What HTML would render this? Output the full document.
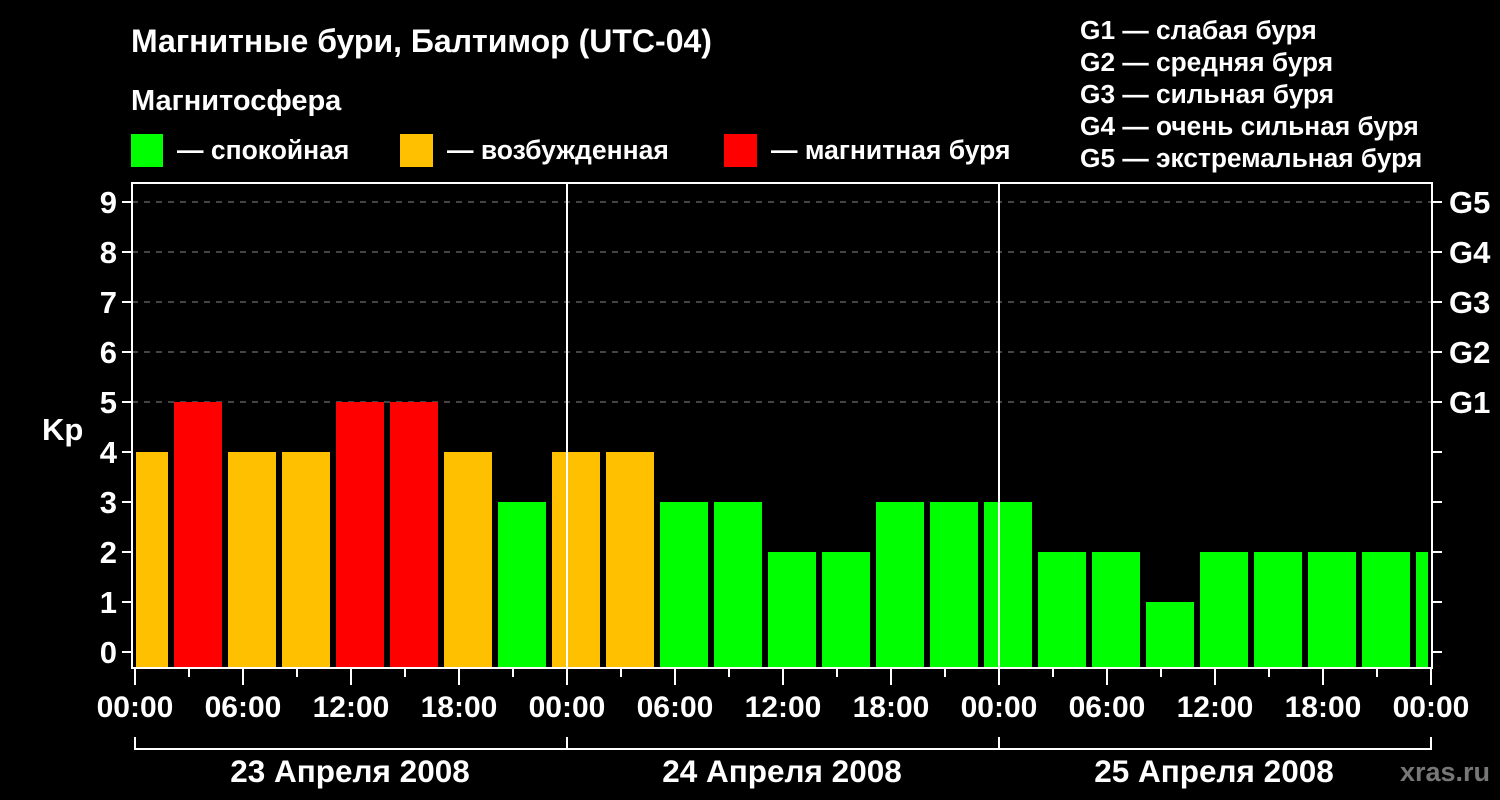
<!DOCTYPE html>
<html><head><meta charset="utf-8"><style>
html,body{margin:0;padding:0;background:#000;width:1500px;height:800px;overflow:hidden}
svg text{font-family:"Liberation Sans",sans-serif;font-weight:bold;fill:#fff}
</style></head><body>
<svg width="1500" height="800" xmlns="http://www.w3.org/2000/svg">
<text x="131" y="52" font-size="32">Магнитные бури, Балтимор (UTC-04)</text>
<text x="131" y="110" font-size="29">Магнитосфера</text>
<rect x="131" y="134" width="32" height="33" fill="#00ff00"/>
<text x="177" y="159" font-size="26.5">— спокойная</text>
<rect x="400" y="134" width="33" height="33" fill="#ffc000"/>
<text x="447" y="159" font-size="26.5">— возбужденная</text>
<rect x="724" y="134" width="33" height="33" fill="#ff0000"/>
<text x="771" y="159" font-size="26.5">— магнитная буря</text>
<g font-size="26.3">
<text x="1080" y="39">G1 — слабая буря</text>
<text x="1080" y="71">G2 — средняя буря</text>
<text x="1080" y="103">G3 — сильная буря</text>
<text x="1080" y="135">G4 — очень сильная буря</text>
<text x="1080" y="167">G5 — экстремальная буря</text>
</g>
<g id="grid" stroke="#888" stroke-dasharray="6,6" stroke-width="1">
<line x1="132" y1="202" x2="1432" y2="202"/>
<line x1="132" y1="252" x2="1432" y2="252"/>
<line x1="132" y1="302" x2="1432" y2="302"/>
<line x1="132" y1="352" x2="1432" y2="352"/>
<line x1="132" y1="402" x2="1432" y2="402"/>
</g>
<g id="bars"></g>
<g stroke="#fff" stroke-width="2" fill="none">
<rect x="132" y="183" width="1300" height="485"/>
<line x1="567" y1="183" x2="567" y2="668"/>
<line x1="999" y1="183" x2="999" y2="668"/>
<polyline points="135,737 135,749 1431,749 1431,737"/>
<line x1="567" y1="737" x2="567" y2="749"/>
<line x1="999" y1="737" x2="999" y2="749"/>
</g>
<g id="ticks" stroke="#fff" stroke-width="2"></g>
<g font-size="31" text-anchor="end" id="ylab"></g>
<text x="42" y="440" font-size="31">Kp</text>
<g font-size="31" id="glab">
<text x="1449" y="213">G5</text><text x="1449" y="263">G4</text><text x="1449" y="313">G3</text><text x="1449" y="363">G2</text><text x="1449" y="413">G1</text>
</g>
<g font-size="30" text-anchor="middle" id="xlab"></g>
<g font-size="31.5" text-anchor="middle">
<text x="350" y="782">23 Апреля 2008</text>
<text x="782" y="782">24 Апреля 2008</text>
<text x="1214" y="782">25 Апреля 2008</text>
</g>
<text x="1490" y="781" font-size="27" text-anchor="end" style="fill:#777">xras.ru</text>
</svg>
<script>
var ns="http://www.w3.org/2000/svg";
function el(p,t,a,txt){var e=document.createElementNS(ns,t);for(var k in a)e.setAttribute(k,a[k]);if(txt!=null)e.textContent=txt;document.getElementById(p).appendChild(e);}
var v=[4,5,4,4,5,5,4,3,4,4,3,3,2,2,3,3,3,2,2,1,2,2,2,2,2];
v.forEach(function(k,i){var x=120+54*i,w=48;if(x<136){w-=136-x;x=136;}if(x+w>1428)w=1428-x;
var c=k>=5?"#ff0000":(k==4?"#ffc000":"#00ff00");var y=652-50*k;
el("bars","rect",{x:x,y:y,width:w,height:667-y,fill:c});});
for(var k=0;k<=9;k++){var y=652-50*k;
el("ticks","line",{x1:122,y1:y,x2:132,y2:y});el("ticks","line",{x1:1432,y1:y,x2:1442,y2:y});
el("ylab","text",{x:117,y:y+11},String(k));}
var lab=["00:00","06:00","12:00","18:00"];
for(var i=0;i<=24;i++){var x=135+54*i;var maj=i%2==0;
el("ticks","line",{x1:x,y1:668,x2:x,y2:maj?685:677});
if(maj)el("xlab","text",{x:x,y:717},lab[(i/2)%4]);}
</script>
</body></html>
